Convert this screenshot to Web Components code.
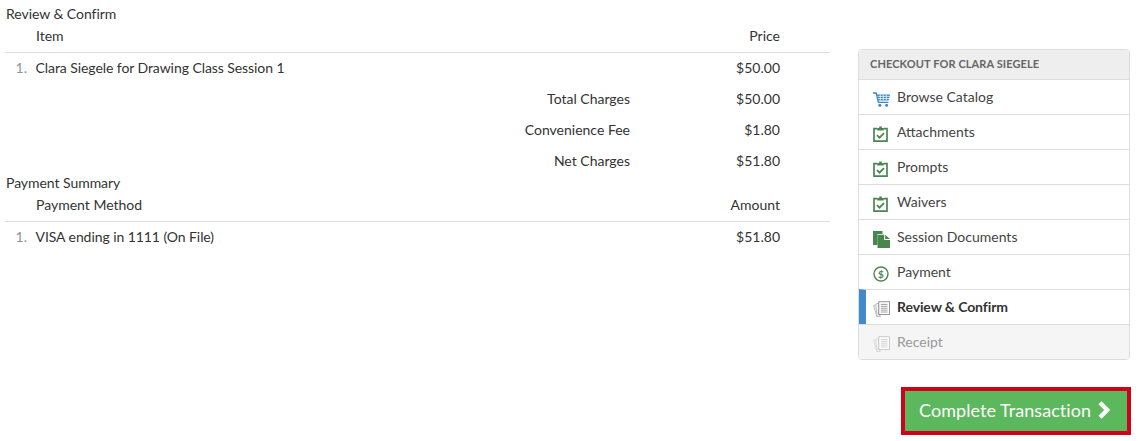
<!DOCTYPE html>
<html>
<head>
<meta charset="utf-8">
<title>Review & Confirm</title>
<style>
  html, body { margin: 0; padding: 0; background: #fff; }
  body { font: 14px/20px Lato, "Liberation Sans", sans-serif; color: #333; }
</style>
</head>
<body>
<checkout-page>
  <summary-section slot="main" heading="Review &amp; Confirm" col-a="Item" col-b="Price">
    <line-row num="1." amount="$50.00">Clara Siegele for Drawing Class Session 1</line-row>
    <total-row label="Total Charges" amount="$50.00"></total-row>
    <total-row label="Convenience Fee" amount="$1.80"></total-row>
    <total-row label="Net Charges" amount="$51.80"></total-row>
  </summary-section>
  <summary-section slot="main" class="tight" heading="Payment Summary" col-a="Payment Method" col-b="Amount">
    <line-row num="1." amount="$51.80">VISA ending in 1111 (On File)</line-row>
  </summary-section>

  <checkout-nav slot="side" heading="Checkout for Clara Siegele">
    <nav-item icon="cart">Browse Catalog</nav-item>
    <nav-item icon="clip">Attachments</nav-item>
    <nav-item icon="clip">Prompts</nav-item>
    <nav-item icon="clip">Waivers</nav-item>
    <nav-item icon="docs">Session Documents</nav-item>
    <nav-item icon="money">Payment</nav-item>
    <nav-item icon="pages" state="active">Review &amp; Confirm</nav-item>
    <nav-item icon="pages" state="off">Receipt</nav-item>
  </checkout-nav>
  <complete-button slot="side">Complete Transaction</complete-button>
</checkout-page>

<script>
class CheckoutPage extends HTMLElement {
  constructor() {
    super();
    this.attachShadow({ mode: 'open' });
    this.shadowRoot.innerHTML = `
      <style>
        :host { display: flex; align-items: flex-start; }
        .main { width: 825px; margin-left: 5px; padding-top: 4px; }
        .side { width: 273px; margin-left: 28px; padding-top: 49px; display: flex; flex-direction: column; }
      </style>
      <div class="main"><slot name="main"></slot></div>
      <div class="side"><slot name="side"></slot></div>
    `;
  }
}

class SummarySection extends HTMLElement {
  constructor() {
    super();
    this.attachShadow({ mode: 'open' });
    this.shadowRoot.innerHTML = `
      <style>
        :host { display: block; }
        :host(.tight) { margin-top: -4px; }
        .title { padding-left: 1px; letter-spacing: -.05px; }
        .head {
          display: grid;
          grid-template-columns: 1fr 120px;
          padding: 2px 50px 6px 31px;
          border-bottom: 1px solid #ddd;
        }
        .head span:last-child { text-align: right; }
      </style>
      <div class="title"></div>
      <div class="head"><span class="a"></span><span class="b"></span></div>
      <slot></slot>
    `;
  }
  connectedCallback() {
    const root = this.shadowRoot;
    root.querySelector('.title').textContent = this.getAttribute('heading');
    root.querySelector('.a').textContent = this.getAttribute('col-a');
    root.querySelector('.b').textContent = this.getAttribute('col-b');
  }
}

class LineRow extends HTMLElement {
  constructor() {
    super();
    this.attachShadow({ mode: 'open' });
    this.shadowRoot.innerHTML = `
      <style>
        :host { display: grid; grid-template-columns: 22px 1fr 120px; column-gap: 8.5px; padding: 5px 50px 6px 0; }
        .num { color: #8a94a0; text-align: right; }
        .txt { letter-spacing: -.07px; }
        .amt { text-align: right; }
      </style>
      <span class="num"></span><span class="txt"><slot></slot></span><span class="amt"></span>
    `;
  }
  connectedCallback() {
    this.shadowRoot.querySelector('.num').textContent = this.getAttribute('num');
    this.shadowRoot.querySelector('.amt').textContent = this.getAttribute('amount');
  }
}

class TotalRow extends HTMLElement {
  constructor() {
    super();
    this.attachShadow({ mode: 'open' });
    this.shadowRoot.innerHTML = `
      <style>
        :host { display: grid; grid-template-columns: 1fr 150px; padding: 5px 50px 6px 0; }
        span { text-align: right; }
      </style>
      <span class="label"></span><span class="amt"></span>
    `;
  }
  connectedCallback() {
    this.shadowRoot.querySelector('.label').textContent = this.getAttribute('label');
    this.shadowRoot.querySelector('.amt').textContent = this.getAttribute('amount');
  }
}

class CheckoutNav extends HTMLElement {
  constructor() {
    super();
    this.attachShadow({ mode: 'open' });
    this.shadowRoot.innerHTML = `
      <style>
        :host { display: block; width: 272px; box-sizing: border-box; border: 1px solid #ddd; border-radius: 4px; overflow: hidden; }
        .head {
          height: 29px;
          box-sizing: border-box;
          padding: 0 11px 2px;
          display: flex;
          align-items: center;
          background: #eee;
          color: #666;
          font-size: 11px;
          font-weight: 700;
          letter-spacing: .1px;
          text-transform: uppercase;
        }
      </style>
      <div class="head"></div>
      <slot></slot>
    `;
  }
  connectedCallback() {
    this.shadowRoot.querySelector('.head').textContent = this.getAttribute('heading');
  }
}

const NAV_ICONS = {
  cart: `<svg viewBox="0 0 17 15" width="17" height="15"><path d="M0 1h3.2l2.2 9.4h10" fill="none" stroke="#3f88c5" stroke-width="1.4"/><path d="M4 2.4h13l-1.4 6.2H5.4z" fill="#3f88c5"/><path d="M7.3 2.4v6.2M10.3 2.4v6.2M13.3 2.4v6.2M4.6 4.4h12M5 6.5h11.4" stroke="#fff" stroke-width=".7"/><circle cx="6.8" cy="13.3" r="1.5" fill="#3f88c5"/><circle cx="13.6" cy="13.3" r="1.5" fill="#3f88c5"/></svg>`,
  clip: `<svg viewBox="0 0 15 16" width="15" height="16"><path d="M4.4 2.7H1v12.5h13V2.7h-3.4" fill="none" stroke="#4a8550" stroke-width="1.7"/><path d="M4.2 4.4V2h2V.4h2.6V2h2v2.4z" fill="#4a8550"/><path d="M4 9.2l2.5 2.5 4.5-4.6" fill="none" stroke="#4a8550" stroke-width="1.8"/></svg>`,
  docs: `<svg viewBox="0 0 17 17" width="17" height="17"><path d="M0 0h9.5v3H4.5V14H0z" fill="#4a8550"/><path d="M4.5 3.8h6.7V9h5.8v8H4.5z" fill="#4a8550"/><path d="M12.2 3.8L17 8h-4.8z" fill="#4a8550"/></svg>`,
  money: `<svg viewBox="0 0 16 16" width="16" height="16"><circle cx="8" cy="8" r="7" fill="none" stroke="#4a8550" stroke-width="1.4"/><text x="8" y="11.6" text-anchor="middle" font-family="Lato, sans-serif" font-size="10" font-weight="700" fill="#4a8550">$</text></svg>`,
  pages: `<svg viewBox="0 0 17 16" width="17" height="16"><g fill="#f4f4f4" stroke="currentColor" stroke-width=".7" opacity=".75"><path d="M.6 4.5l4.5-1.4v9.5l2 2.6-3.2.6z"/><path d="M2.6 3.2l3-1v11l2 2.2-3.4.3z"/></g><path d="M5.8.7h10.7v12.8H5.8z" fill="#fff" stroke="currentColor" stroke-width=".9"/><path d="M7.8 3.4h6.7M7.8 5.3h6.7M7.8 7.2h6.7M7.8 9.1h6.7M7.8 11h6.7" stroke="currentColor" stroke-width=".8"/></svg>`
};

class NavItem extends HTMLElement {
  constructor() {
    super();
    this.attachShadow({ mode: 'open' });
    this.shadowRoot.innerHTML = `
      <style>
        :host { display: flex; align-items: center; height: 35px; box-sizing: border-box; border-top: 1px solid #ddd; padding-left: 14px; color: #444; }
        :host([state="active"]) { border-left: 7px solid #428bca; padding-left: 7px; font-weight: 700; color: #333; letter-spacing: -.1px; }
        :host([state="off"]) { background: #f5f5f5; color: #999; }
        .ico { width: 18px; height: 18px; margin-right: 6px; display: flex; align-items: center; color: #8a8a8a; margin-top: 4px; }
        :host([state="off"]) .ico { color: #c4c4c4; }
        svg { display: block; }
      </style>
      <span class="ico"></span><slot></slot>
    `;
  }
  connectedCallback() {
    this.shadowRoot.querySelector('.ico').innerHTML = NAV_ICONS[this.getAttribute('icon')];
  }
}

class CompleteButton extends HTMLElement {
  constructor() {
    super();
    this.attachShadow({ mode: 'open' });
    this.shadowRoot.innerHTML = `
      <style>
        :host { display: flex; align-self: flex-end; margin-top: 27px; }
        button {
          box-sizing: border-box;
          width: 230px;
          height: 48px;
          padding: 0 0 2px 14px;
          display: flex;
          align-items: center;
          background: #5cb85c;
          border: 4px solid #d0021b;
          color: #fff;
          font: 18px/24px Lato, "Liberation Sans", sans-serif;
          letter-spacing: .05px;
        }
        svg { margin-left: 6px; }
      </style>
      <button><slot></slot><svg viewBox="0 0 14 18" width="14" height="18"><path d="M3 1.8l7.2 7.2-7.2 7.2" fill="none" stroke="#fff" stroke-width="4.4"/></svg></button>
    `;
  }
}

customElements.define('checkout-page', CheckoutPage);
customElements.define('summary-section', SummarySection);
customElements.define('line-row', LineRow);
customElements.define('total-row', TotalRow);
customElements.define('checkout-nav', CheckoutNav);
customElements.define('nav-item', NavItem);
customElements.define('complete-button', CompleteButton);
</script>
</body>
</html>
